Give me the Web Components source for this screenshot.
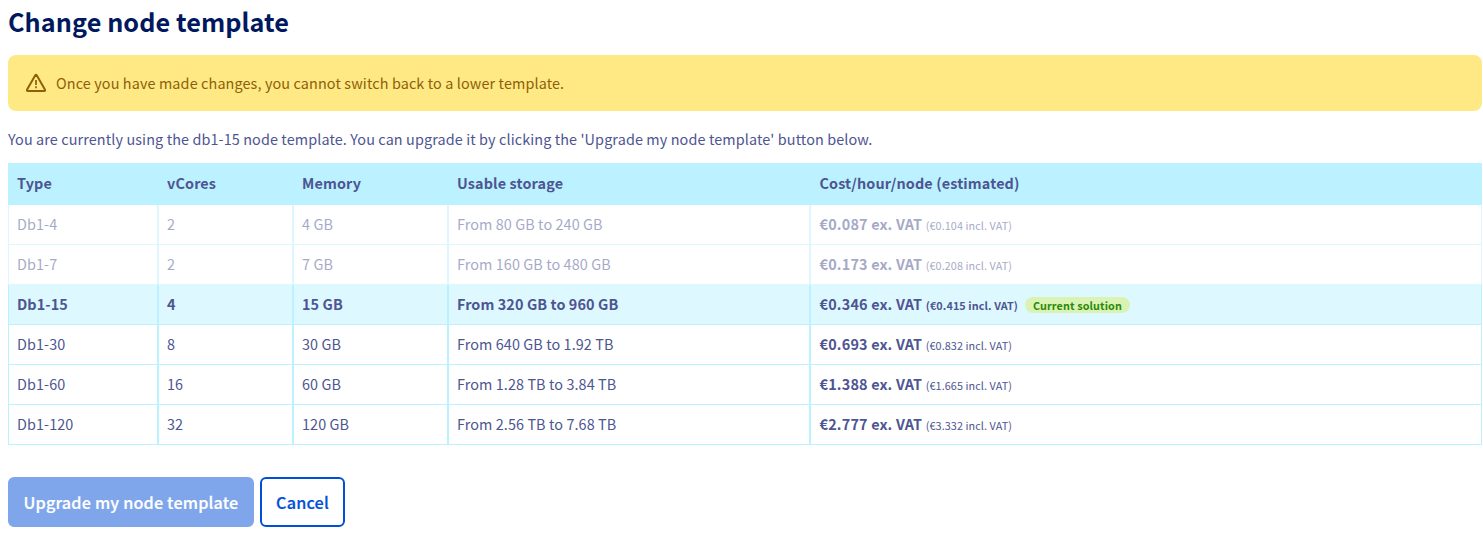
<!DOCTYPE html>
<html lang="en">
<head>
<meta charset="utf-8">
<title>Change node template</title>
<style>
body{margin:0;background:#fff;font-family:"Source Sans Pro","Noto Sans CJK SC",sans-serif;color:#4d5592}
</style>
</head>
<body>
<template-page></template-page>
<script>
class WarningMessage extends HTMLElement{
  constructor(){super();this.attachShadow({mode:"open"}).innerHTML=`
<style>
:host{display:flex;align-items:center;box-sizing:border-box;height:56px;padding:0 16px;border-radius:8px;background:#ffe985;color:#8d6008;font-size:14.4px;line-height:24px;letter-spacing:.12px}
svg{display:block;width:24px;height:24px;margin-right:8px;flex:none}
span{display:block}
</style>
<svg viewBox="0 0 24 24" fill="none" stroke="currentColor" stroke-width="2" stroke-linejoin="round"><path d="M11.3 4.3Q12 3.2 12.7 4.3L20.9 18.6Q21.5 20 20.2 20H3.8Q2.5 20 3.1 18.6Z"/><path d="M12 9v5M12 15.3v2" stroke-width="1.7"/></svg>
<span><slot></slot></span>`}
}
customElements.define("warning-message",WarningMessage);

class SolutionBadge extends HTMLElement{
  constructor(){super();this.attachShadow({mode:"open"}).innerHTML=`
<style>
:host{display:inline-flex;align-items:center;height:16px;padding:0 8px;border-radius:8px;background:#daf3b5;color:#2b8a0a;font-size:10.8px;line-height:16px;font-weight:700;letter-spacing:.12px}
</style><slot></slot>`}
}
customElements.define("solution-badge",SolutionBadge);

class ActionButton extends HTMLElement{
  constructor(){super();this.attachShadow({mode:"open"}).innerHTML=`
<style>
:host{display:block}
button{display:block;box-sizing:border-box;width:100%;height:50px;margin:0;padding:0;border:2px solid #0050d7;border-radius:6px;background:#fff;color:#0050d7;font:500 16.2px/24px "Source Sans Pro","Noto Sans CJK SC",sans-serif;letter-spacing:.18px;-webkit-text-stroke:.2px currentColor}
:host([disabled]) button{background:#7fa6ea;border-color:#7fa6ea;color:#fff}
</style><button><slot></slot></button>`}
}
customElements.define("action-button",ActionButton);

const plans=[
 ["Db1-4","2","4 GB","From 80 GB to 240 GB","0.087","0.104","muted"],
 ["Db1-7","2","7 GB","From 160 GB to 480 GB","0.173","0.208","muted"],
 ["Db1-15","4","15 GB","From 320 GB to 960 GB","0.346","0.415","current"],
 ["Db1-30","8","30 GB","From 640 GB to 1.92 TB","0.693","0.832",""],
 ["Db1-60","16","60 GB","From 1.28 TB to 3.84 TB","1.388","1.665",""],
 ["Db1-120","32","120 GB","From 2.56 TB to 7.68 TB","2.777","3.332",""]];

class PlanTable extends HTMLElement{
  constructor(){super();this.attachShadow({mode:"open"}).innerHTML=`
<style>
:host{display:block;font-size:14.4px;line-height:24px;letter-spacing:.09px}
table{width:100%;table-layout:fixed;border-collapse:separate;border-spacing:0}
th,td{box-sizing:border-box;padding:0 8px 2px;text-align:left;border:1px solid #bcf1ff;white-space:nowrap;vertical-align:middle}
th:last-child,td:last-child{padding-left:8.5px}
th{height:42px;background:#bcf1ff;font-weight:700;letter-spacing:.13px}
td{height:40px;border-top:0}
.line{display:flex;align-items:center;height:24px}
strong{font-weight:700;letter-spacing:.19px}
small{font-size:10.8px;margin:2px 0 0 3.5px}
solution-badge{margin:3px 0 0 7px}
.muted{opacity:.5}
.current td{background:#def8ff;font-weight:700}
</style>
<table><colgroup><col style="width:150px"><col style="width:135px"><col style="width:155px"><col style="width:362px"><col></colgroup>
<thead><tr><th>Type</th><th>vCores</th><th>Memory</th><th>Usable storage</th><th>Cost/hour/node (estimated)</th></tr></thead>
<tbody>${plans.map(([type,cores,memory,storage,net,gross,state])=>`<tr class="${state}"><td>${type}</td><td>${cores}</td><td>${memory}</td><td>${storage}</td><td><div class="line"><strong>€${net} ex. VAT</strong><small>(€${gross} incl. VAT)</small>${state==="current"?"<solution-badge>Current solution</solution-badge>":""}</div></td></tr>`).join("")}</tbody></table>`}
}
customElements.define("plan-table",PlanTable);

class TemplatePage extends HTMLElement{
  constructor(){super();this.attachShadow({mode:"open"}).innerHTML=`
<style>
:host{display:block;padding:5px 1px 0 8px}
h1{margin:0 0 18px;font-size:25.2px;line-height:32px;font-weight:700;letter-spacing:.08px;color:#00185e}
p{margin:16px 0 12px;font-size:14.4px;line-height:24px;letter-spacing:.11px}
.actions{display:flex;gap:6px;margin-top:32px}
.upgrade{width:246px}
.cancel{width:85px}
</style>
<h1>Change node template</h1>
<warning-message>Once you have made changes, you cannot switch back to a lower template.</warning-message>
<p>You are currently using the db1-15 node template. You can upgrade it by clicking the 'Upgrade my node template' button below.</p>
<plan-table></plan-table>
<div class="actions"><action-button class="upgrade" disabled>Upgrade my node template</action-button><action-button class="cancel">Cancel</action-button></div>`}
}
customElements.define("template-page",TemplatePage);
</script>
</body>
</html>
